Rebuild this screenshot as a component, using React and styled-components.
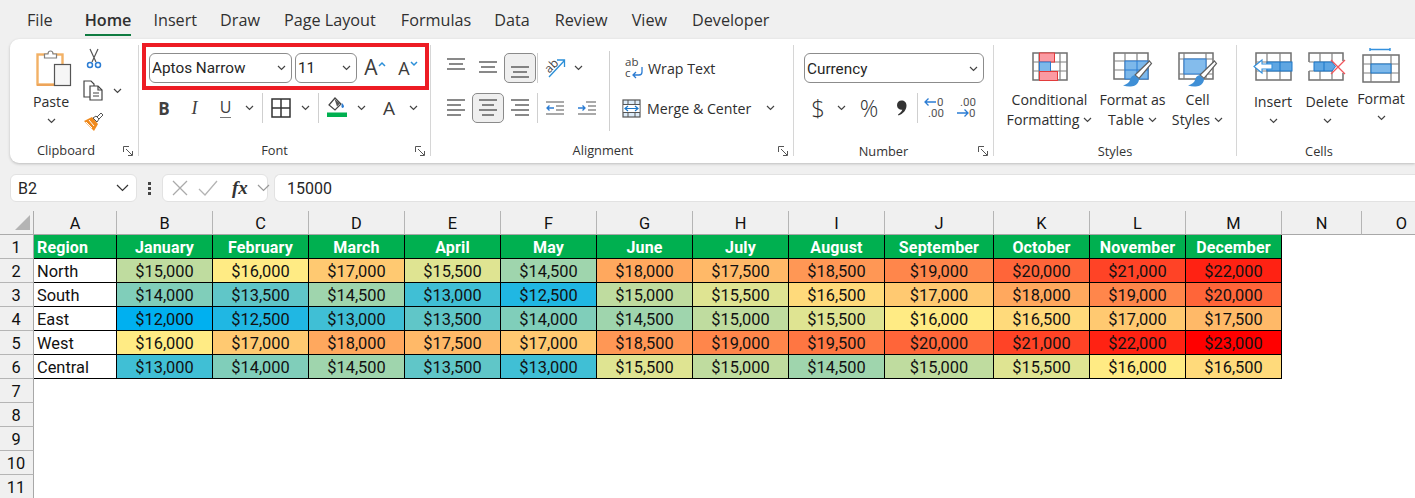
import { Fragment } from 'react';
import styled, { createGlobalStyle } from 'styled-components';

const UI_FONT = '"Open Sans", "Noto Sans", sans-serif';
const CELL_FONT = 'Roboto, "Liberation Sans", sans-serif';

const GlobalStyle = createGlobalStyle`
  html, body { margin: 0; padding: 0; height: 100%; overflow: hidden; background: #f0f0f0; }
  #root { height: 498px; overflow: hidden; }
  * { box-sizing: border-box; }
  svg { overflow: visible; }
`;

const Page = styled.div`
  width: 1415px;
  height: 498px;
  overflow: hidden;
  background: #f0f0f0;
  font-family: ${UI_FONT};
  color: #262626;
`;

/* tabs */
const TabBar = styled.div`
  display: flex;
  height: 39px;
  padding-left: 27px;
`;

const Tab = styled.div`
  height: 36px;
  margin-right: ${({ $gap }) => $gap}px;
  padding-top: 8px;
  font-size: 16.2px;
  line-height: 24px;
  font-weight: ${({ $active }) => ($active ? 600 : 400)};
  color: #303030;
  border-bottom: 2px solid ${({ $active }) => ($active ? '#0f7b41' : 'transparent')};
`;

/* ribbon */
const Ribbon = styled.div`
  display: flex;
  align-items: flex-start;
  height: 124px;
  margin-left: 10px;
  background: #fff;
  border-radius: 9px 0 0 9px;
  box-shadow: 0 1px 3px rgba(0, 0, 0, 0.22);
`;

const Group = styled.div`
  position: relative;
  display: flex;
  flex-direction: column;
  flex: none;
  width: ${({ $w }) => $w}px;
  height: 118px;
`;

const GroupBody = styled.div`
  flex: 1;
  display: flex;
  flex-direction: ${({ $row }) => ($row ? 'row' : 'column')};
  padding-left: ${({ $pl }) => $pl || 0}px;
  min-height: 0;
`;

const GroupLabel = styled.div`
  height: 13px;
  line-height: 13px;
  font-size: 12.8px;
  text-align: center;
  color: #333;
  white-space: nowrap;
  padding-top: ${({ $dy }) => $dy || 0}px;
  padding-right: ${({ $shift }) => $shift || 0}px;
`;

const Launcher = styled.svg`
  position: absolute;
  right: 4px;
  bottom: 0;
  width: 11px;
  height: 11px;
`;

const GroupSep = styled.div`
  flex: none;
  width: 1px;
  height: 111px;
  margin-top: 6px;
  background: #d6d6d6;
`;

const Stack = styled.div`
  display: flex;
  flex-direction: column;
  margin-top: ${({ $mt }) => $mt || 0}px;
  margin-left: ${({ $ml }) => $ml || 0}px;
`;

const ToolRow = styled.div`
  display: flex;
  align-items: center;
  height: ${({ $h }) => $h || 30}px;
  margin-top: ${({ $mt }) => $mt || 0}px;
  margin-left: ${({ $ml }) => $ml || 0}px;
`;

const Tool = styled.div`
  flex: none;
  display: flex;
  align-items: center;
  justify-content: center;
  width: ${({ $w }) => $w || 30}px;
  height: 100%;
  white-space: nowrap;
  color: #333;
  ${({ $on }) => ($on ? 'background: #efefef; border: 1px solid #8a8a8a; border-radius: 5px;' : '')}
`;

const ToolSep = styled.div`
  flex: none;
  width: 1px;
  height: ${({ $h }) => $h || 30}px;
  margin: ${({ $mt }) => $mt || 0}px ${({ $mr }) => $mr || 1}px 0 ${({ $ml }) => $ml || 1}px;
  background: #cfcfcf;
`;

const HighlightBox = styled.div`
  display: flex;
  align-items: center;
  width: 287px;
  height: 47px;
  margin: 4px 0 0 3px;
  padding: 2px 0 0 3px;
  border: 4px solid #ed1c24;
`;

const Combo = styled.div`
  flex: none;
  display: flex;
  align-items: center;
  justify-content: space-between;
  width: ${({ $w }) => $w}px;
  height: 30px;
  margin-right: ${({ $mr }) => $mr || 0}px;
  padding: 1px 5px 0 2px;
  background: #fff;
  border: 1px solid #8c8c8c;
  border-radius: 6px;
  font-family: ${CELL_FONT};
  font-size: 15.3px;
  color: #262626;
`;

const BoldGlyph = styled.span`
  font-size: 17px;
  font-weight: 700;
  color: #404040;
`;

const ItalicGlyph = styled.span`
  font-family: "Liberation Serif", serif;
  font-size: 18px;
  font-style: italic;
  color: #404040;
`;

const UnderGlyph = styled.span`
  font-size: 16px;
  line-height: 19px;
  color: #404040;
  border-bottom: 1.5px solid #777;
`;

const LetterA = styled.span`
  font-size: ${({ $s }) => $s}px;
  line-height: 1;
  color: #3c3c3c;
`;

const ThinGlyph = styled.span`
  font-size: ${({ $s }) => $s}px;
  font-weight: 300;
  line-height: 1;
  color: #333;
`;

const SmallText = styled.span`
  font-size: 14.2px;
  color: #2e2e2e;
  white-space: nowrap;
  margin-left: ${({ $ml }) => $ml || 0}px;
`;

const BigButton = styled.div`
  flex: none;
  display: flex;
  flex-direction: column;
  align-items: center;
  width: ${({ $w }) => $w}px;
  padding-top: ${({ $pt }) => $pt || 13}px;
`;

const IconNudge = styled.div`
  display: flex;
  height: ${({ $h }) => $h}px;
  margin-left: ${({ $ml }) => $ml || 0}px;
`;

const BigLabel = styled.div`
  display: flex;
  align-items: center;
  gap: 4px;
  height: 20px;
  margin-top: ${({ $mt }) => $mt || 0}px;
  font-size: 14.2px;
  line-height: 20px;
  color: #2e2e2e;
  white-space: nowrap;
`;

const ChevLine = styled.div`
  display: flex;
  justify-content: center;
  align-items: center;
  height: 18px;
`;

/* formula bar */
const FormulaBar = styled.div`
  display: flex;
  align-items: stretch;
  height: 28px;
  margin: 11px 0 9px 10px;
  font-family: ${CELL_FONT};
  font-size: 16px;
`;

const NameBox = styled.div`
  display: flex;
  align-items: center;
  justify-content: space-between;
  width: 127px;
  padding: 0 7px;
  background: #fff;
  border: 1px solid #e2e2e2;
  border-radius: 6px;
`;

const Dots = styled.div`
  display: flex;
  flex-direction: column;
  align-items: center;
  justify-content: center;
  gap: 2px;
  width: 25px;
  & > i { display: block; width: 3px; height: 3px; background: #444; }
`;

const FxBox = styled.div`
  display: flex;
  align-items: center;
  width: 106px;
  padding-left: 8px;
  background: #fff;
  border: 1px solid #e2e2e2;
  border-radius: 6px;
`;

const FxGlyph = styled.span`
  font-family: "Liberation Serif", serif;
  font-style: italic;
  font-weight: 700;
  font-size: 19px;
  color: #333;
  margin: 0 9px 0 5px;
`;

const FormulaInput = styled.div`
  flex: 1;
  display: flex;
  align-items: center;
  margin-left: 6px;
  padding-left: 12px;
  background: #fff;
  border: 1px solid #e2e2e2;
  border-right: 0;
  border-radius: 6px 0 0 6px;
`;

/* sheet */
const Sheet = styled.div`
  display: grid;
  grid-template-columns: 34px 83px repeat(8, 96px) 109px repeat(3, 96px) 80px 80px;
  grid-auto-rows: 24px;
  width: 1415px;
  overflow: hidden;
  background: #fff;
  font-family: ${CELL_FONT};
  font-size: 16.4px;
  color: #111;
`;

const Corner = styled.div`
  position: relative;
  background: #f0f0f0;
  border-right: 1px solid #ababab;
  border-bottom: 1px solid #ababab;
  &::after {
    content: '';
    position: absolute;
    right: 3px;
    bottom: 4px;
    width: 15px;
    height: 15px;
    background: #b4b4b4;
    clip-path: polygon(100% 0, 100% 100%, 0 100%);
  }
`;

const ColHead = styled.div`
  display: flex;
  align-items: center;
  justify-content: center;
  background: #f0f0f0;
  border-right: 1px solid #b5b5b5;
  border-bottom: 1px solid #a8a8a8;
  padding-top: 2px;
`;

const RowHead = styled.div`
  display: flex;
  align-items: center;
  justify-content: center;
  padding: 2px 1px 0 0;
  background: #f0f0f0;
  border-right: 1px solid #a8a8a8;
  border-bottom: 1px solid #b5b5b5;
`;

const Cell = styled.div`
  display: flex;
  align-items: center;
  justify-content: ${({ $left }) => ($left ? 'flex-start' : 'center')};
  padding: 2px 0 0 ${({ $left }) => ($left ? '3px' : '0')};
  background: ${({ $bg }) => $bg || '#fff'};
  border-right: 1px solid #000;
  border-bottom: 1px solid #000;
  color: ${({ $head }) => ($head ? '#fff' : '#111')};
  font-size: ${({ $head }) => ($head ? '16px' : 'inherit')};
  font-weight: ${({ $head }) => ($head ? 700 : 400)};
  letter-spacing: ${({ $head }) => ($head ? '0.15px' : '0')};
  white-space: nowrap;
`;

const Blank = styled.div`
  background: #fff;
  grid-column: ${({ $span }) => $span || 'auto'};
`;

const COLS = ['A', 'B', 'C', 'D', 'E', 'F', 'G', 'H', 'I', 'J', 'K', 'L', 'M', 'N', 'O'];
const MONTHS = ['Region', 'January', 'February', 'March', 'April', 'May', 'June', 'July', 'August', 'September', 'October', 'November', 'December'];
const DATA = [
  ['North', 15000, 16000, 17000, 15500, 14500, 18000, 17500, 18500, 19000, 20000, 21000, 22000],
  ['South', 14000, 13500, 14500, 13000, 12500, 15000, 15500, 16500, 17000, 18000, 19000, 20000],
  ['East', 12000, 12500, 13000, 13500, 14000, 14500, 15000, 15500, 16000, 16500, 17000, 17500],
  ['West', 16000, 17000, 18000, 17500, 17000, 18500, 19000, 19500, 20000, 21000, 22000, 23000],
  ['Central', 13000, 14000, 14500, 13500, 13000, 15500, 15000, 14500, 15000, 15500, 16000, 16500],
];

// excel 3 colour scale: blue, yellow, red
const mix = (a, b, t) => a.map((v, i) => Math.round(v + (b[i] - v) * t));
const scaleColor = (v) => {
  const blue = [0, 176, 240];
  const yellow = [255, 235, 132];
  const red = [255, 0, 0];
  const c = v <= 16000 ? mix(blue, yellow, (v - 12000) / 4000) : mix(yellow, red, (v - 16000) / 7000);
  return `rgb(${c.join(',')})`;
};

const money = (v) => '$' + v.toLocaleString('en-US');

const Chev = ({ c = '#444' }) => (
  <svg width="9" height="6" viewBox="0 0 9 6" fill="none"><path d="M1 1l3.500 3.500L8 1" stroke={c} strokeWidth="1.200" /></svg>
);

const WideChev = ({ c = '#444' }) => (
  <svg width="13" height="8" viewBox="0 0 13 8" fill="none"><path d="M1 1l5.500 5.500L12 1" stroke={c} strokeWidth="1.200" /></svg>
);

const Launch = () => (
  <Launcher viewBox="0 0 11 11" fill="none">
    <path d="M.5 6V.5H6M3 3l6 6M9.500 5v4.500H5" stroke="#555" strokeWidth="1" />
  </Launcher>
);

const PasteIcon = () => (
  <svg width="36" height="38" viewBox="0 0 36 38">
    <rect x="1.500" y="5.500" width="25" height="30" fill="#fff" stroke="#f2b166" strokeWidth="2.400" />
    <path d="M1 36h26" stroke="#eda45a" strokeWidth="2" />
    <path d="M8.500 9V5h3.500c0-4 5-4 5 0h3.500v4z" fill="#fff" stroke="#7f7f7f" strokeWidth="1.200" />
    <rect x="18.500" y="15.500" width="16" height="21" fill="#f6f6f6" stroke="#555" strokeWidth="1.200" />
  </svg>
);

const CutIcon = () => (
  <svg width="16" height="21" viewBox="0 0 16 21" fill="none">
    <path d="M4 1l6 13M12 1L6 14" stroke="#555" strokeWidth="1.200" />
    <circle cx="4" cy="17" r="2.500" stroke="#2b7cd3" strokeWidth="1.500" />
    <circle cx="12" cy="17" r="2.500" stroke="#2b7cd3" strokeWidth="1.500" />
  </svg>
);

const CopyIcon = () => (
  <svg width="21" height="21" viewBox="0 0 21 21" fill="#fff" stroke="#444" strokeWidth="1.200">
    <path d="M1 1h7l3 3v13H1z" />
    <path d="M7 6h8l4 4v10H7z" />
    <path d="M15 6v4h4M10 13h6M10 16h6" fill="none" />
  </svg>
);

const BrushIcon = () => (
  <svg width="21" height="20" viewBox="0 0 21 20">
    <path d="M1 9l8-4 6 7-4 7z" fill="#f08a1d" />
    <path d="M3 10l6 6M6 8l5 6" stroke="#fff" strokeWidth="1" />
    <path d="M10 6l3-2 3 3-2 3zM14 5l4-4 2 2-4 4z" fill="#fff" stroke="#555" strokeWidth="1" />
  </svg>
);

const SizeCaret = ({ down }) => (
  <svg width="8" height="14" viewBox="0 0 8 14" fill="none">
    <path d={down ? 'M1 1l3 3 3-3' : 'M1 5l3-3 3 3'} stroke="#2b8fd8" strokeWidth="1.500" />
  </svg>
);

const BorderIcon = () => (
  <svg width="20" height="20" viewBox="0 0 20 20" fill="none" stroke="#333" strokeWidth="1.500">
    <rect x="1" y="1" width="18" height="18" />
    <path d="M10 1v18M1 10h18" />
  </svg>
);

const FillIcon = () => (
  <svg width="22" height="22" viewBox="0 0 22 22">
    <path d="M3 8l6-7 6 6-6 6z" fill="#fff" stroke="#444" strokeWidth="1.200" />
    <path d="M8.500 2l5.500 4.500-3 3z" fill="#555" />
    <path d="M16 6c2 2 2.500 3.500 1.500 4.500s-2.500 0-2-2z" fill="#2b7cd3" />
    <rect x="1" y="15.500" width="20" height="4.500" fill="#00b050" />
  </svg>
);

const Lines = ({ rows }) => (
  <svg width="20" height="20" viewBox="0 0 20 20" fill="none" stroke="#4a4a4a" strokeWidth="1.300">
    {rows.map(([y, x1, x2]) => <path key={y} d={`M${x1} ${y}H${x2}`} />)}
  </svg>
);

const OrientIcon = () => (
  <svg width="22" height="22" viewBox="0 0 22 22" fill="none">
    <text x="1" y="13" transform="rotate(-45 7 11)" fontFamily="Open Sans, sans-serif" fontSize="12" fill="#444">ab</text>
    <path d="M4 20L19 4M12 3h7.500v7" stroke="#2b8fd8" strokeWidth="1.300" />
  </svg>
);

const IndentIcon = ({ inc }) => (
  <svg width="20" height="16" viewBox="0 0 20 16" fill="none">
    <path d={inc ? 'M9 2h10M11 6h8M11 10h8M1 14h18' : 'M1 2h18M11 6h8M11 10h8M1 14h18'} stroke="#555" strokeWidth="1.200" />
    <path d={inc ? 'M1 8h7M5.500 5.500L8 8l-2.500 2.500' : 'M2 8h7M4.500 5.500L2 8l2.500 2.500'} stroke="#2b7cd3" strokeWidth="1.300" />
  </svg>
);

const WrapIcon = () => (
  <svg width="20" height="22" viewBox="0 0 20 22" fill="none">
    <text x="0" y="9" fontFamily="Open Sans, sans-serif" fontSize="11.500" fill="#444">ab</text>
    <text x="0" y="20" fontFamily="Open Sans, sans-serif" fontSize="11.500" fill="#444">c</text>
    <path d="M17 10v5c0 2-1 3-3 3H8M11 15l-3 3 3 3" stroke="#2b7cd3" strokeWidth="1.300" />
  </svg>
);

const MergeIcon = () => (
  <svg width="19" height="19" viewBox="0 0 19 19" fill="none">
    <rect x="1" y="1" width="17" height="17" fill="#dcebf8" stroke="#555" strokeWidth="1.200" />
    <path d="M1 5.500h17M1 13.500h17M6 1v4M13 1v4M6 14v4M13 14v4" stroke="#555" strokeWidth="1" />
    <rect x="1.500" y="6" width="16" height="7" fill="#fff" />
    <path d="M3 9.500h13M6 7l-3 2.500L6 12M13 7l3 2.500L13 12" stroke="#1b76c8" strokeWidth="1.200" />
  </svg>
);

const CommaIcon = () => (
  <svg width="11" height="16" viewBox="0 0 11 16">
    <path d="M5.500 0.500C8.500 0.500 10.500 2.500 10.500 5.500C10.500 10 7 14 2.500 15.500L2 14.500C4.500 13 6 11 6.300 9.700C3.500 10 1 8.200 1 5.200C1 2.500 3 0.500 5.500 0.500z" fill="#333" />
  </svg>
);

const DecimalIcon = ({ more }) => (
  <svg width="22" height="22" viewBox="0 0 22 22" fill="none">
    {more ? (
      <>
        <path d="M1 5h11M4.500 1.500L1 5l3.500 3.500" stroke="#2b7cd3" strokeWidth="1.300" />
        <text x="13" y="9" fontFamily="Roboto, sans-serif" fontSize="11.500" fill="#555">0</text>
        <text x="4" y="20" fontFamily="Roboto, sans-serif" fontSize="11.500" fill="#555">.00</text>
      </>
    ) : (
      <>
        <text x="4" y="9" fontFamily="Roboto, sans-serif" fontSize="11.500" fill="#555">.00</text>
        <path d="M1 16h11M8.500 12.500L12 16l-3.500 3.500" stroke="#2b7cd3" strokeWidth="1.300" />
        <text x="13" y="20" fontFamily="Roboto, sans-serif" fontSize="11.500" fill="#555">0</text>
      </>
    )}
  </svg>
);

const GridBase = ({ xs, ys, w = 36, h = 28 }) => (
  <>
    <rect x="1" y="1" width={w - 2} height={h - 2} fill="#fff" stroke="#6f6f6f" strokeWidth="1.500" />
    <path d={`${ys.map((y) => `M1 ${y}H${w - 1}`).join('')}${xs.map((x) => `M${x} 1V${h - 1}`).join('')}`} stroke="#808080" strokeWidth="1.200" />
  </>
);

const CondIcon = () => (
  <svg width="36" height="30" viewBox="0 0 36 30" fill="none">
    <GridBase w={36} h={29} xs={[7, 18, 28]} ys={[10, 19]} />
    <rect x="7.500" y="1" width="15" height="9" fill="#fb9aa2" stroke="#e23b3b" strokeWidth="1" />
    <rect x="7.500" y="10" width="11" height="9.500" fill="#7db8ea" stroke="#2b7cd3" strokeWidth="1" />
    <rect x="7.500" y="19.500" width="18" height="9" fill="#fb9aa2" stroke="#e23b3b" strokeWidth="1" />
  </svg>
);

const Paintbrush = () => (
  <>
    <path d="M36.500 9L38.500 11.500L26 26.500L22 23z" fill="#fff" stroke="#5f5f5f" strokeWidth="1.200" />
    <path d="M21.500 23c-2.500 .5-4 2.500-4.500 5-.5 2.500-3.500 4.500-7 5.500 6 2 13.500 1.500 15.500-4 .5-1 .5-2 .5-2.500z" fill="#3f8fd6" />
  </>
);

const TableIcon = () => (
  <svg width="40" height="36" viewBox="0 0 40 36" fill="none">
    <GridBase w={36} h={28} xs={[12, 24]} ys={[9, 18]} />
    <rect x="12" y="9" width="23" height="18" fill="#7db8ea" stroke="#2b7cd3" strokeWidth="1" />
    <path d="M12 18h23M24 9v18" stroke="#2b7cd3" strokeWidth="1" />
    <Paintbrush />
  </svg>
);

const CellStyleIcon = () => (
  <svg width="40" height="36" viewBox="0 0 40 36" fill="none">
    <GridBase w={36} h={28} xs={[6, 28]} ys={[7, 22]} />
    <rect x="6" y="7" width="22" height="15" fill="#84bcec" stroke="#2b7cd3" strokeWidth="1" />
    <Paintbrush />
  </svg>
);

const InsertIcon = () => (
  <svg width="40" height="30" viewBox="0 0 40 30" fill="none">
    <rect x="3" y="1" width="35" height="27" fill="#fff" stroke="#6f6f6f" strokeWidth="1.500" />
    <path d="M14 1v27M27 1v27M3 10h35M3 19h35" stroke="#808080" strokeWidth="1.200" />
    <rect x="14" y="10" width="25" height="9" fill="#5fa6e2" stroke="#1b76c8" strokeWidth="1" />
    <path d="M27 10v9" stroke="#1b76c8" />
    <path d="M1 14.500L9 8v4h10v5H9v4z" fill="#fff" stroke="#3390dd" strokeWidth="1.100" />
  </svg>
);

const DeleteIcon = () => (
  <svg width="38" height="30" viewBox="0 0 38 30" fill="none">
    <path d="M1 10V1h34v8M1 19v9h34v-7" stroke="#6f6f6f" strokeWidth="1.500" />
    <path d="M12 1v9M12 19v9M24 1v9M24 19v9M1 10h24M1 19h24" stroke="#808080" strokeWidth="1.200" />
    <path d="M6 10h18l3.500 4.500L24 19H6z" fill="#5fa6e2" stroke="#1b76c8" strokeWidth="1" />
    <path d="M16 10v9" stroke="#1b76c8" />
    <path d="M23 8l14 14M37 8L23 22" stroke="#f0565c" strokeWidth="1.300" />
  </svg>
);

const FormatIcon = () => (
  <svg width="38" height="36" viewBox="0 0 38 36" fill="none">
    <path d="M8 1.500h20M8 0v3M28 0v3" stroke="#3390dd" strokeWidth="1.400" />
    <rect x="1" y="7" width="36" height="27" fill="#fff" stroke="#6f6f6f" strokeWidth="1.500" />
    <path d="M9 7v27M29 7v27M1 16h36M1 25h36" stroke="#808080" strokeWidth="1.200" />
    <rect x="9" y="16" width="20" height="9" fill="#7db8ea" stroke="#1b76c8" strokeWidth="1" />
  </svg>
);

const X = () => (
  <svg width="18" height="18" viewBox="0 0 18 18" fill="none"><path d="M2 2l14 14M16 2L2 16" stroke="#aaa" strokeWidth="1.300" /></svg>
);

const Check = () => (
  <svg width="22" height="16" viewBox="0 0 22 16" fill="none"><path d="M2 9l6 6L20 1" stroke="#b4b4b4" strokeWidth="1.300" /></svg>
);

const App = () => {
  return (
    <Page>
      <GlobalStyle />
      <TabBar>
        <Tab $gap={32}>File</Tab>
        <Tab $gap={22} $active>Home</Tab>
        <Tab $gap={23}>Insert</Tab>
        <Tab $gap={24}>Draw</Tab>
        <Tab $gap={25}>Page Layout</Tab>
        <Tab $gap={23}>Formulas</Tab>
        <Tab $gap={25}>Data</Tab>
        <Tab $gap={24}>Review</Tab>
        <Tab $gap={25}>View</Tab>
        <Tab $gap={0}>Developer</Tab>
      </TabBar>

      <Ribbon>
        <Group $w={128}>
          <GroupBody $row>
            <BigButton $w={82} $pt={10}>
              <IconNudge $h={38} $ml={6}><PasteIcon /></IconNudge>
              <BigLabel $mt={5}>Paste</BigLabel>
              <ChevLine><Chev /></ChevLine>
            </BigButton>
            <Stack $mt={9} $ml={-8}>
              <ToolRow $h={21} $ml={-1}><Tool $w={21}><CutIcon /></Tool></ToolRow>
              <ToolRow $h={21} $mt={11} $ml={-1}>
                <Tool $w={21}><CopyIcon /></Tool>
                <Tool $w={27}><Chev /></Tool>
              </ToolRow>
              <ToolRow $h={20} $mt={11} $ml={-1}><Tool $w={21}><BrushIcon /></Tool></ToolRow>
            </Stack>
          </GroupBody>
          <GroupLabel $shift={16}>Clipboard</GroupLabel>
          <Launch />
        </Group>
        <GroupSep />

        <Group $w={291}>
          <GroupBody>
            <HighlightBox>
              <Combo $w={143} $mr={3}>Aptos Narrow<Chev /></Combo>
              <Combo $w={62}>11<Chev /></Combo>
              <Tool $w={36}><LetterA $s={21}>A</LetterA><SizeCaret /></Tool>
              <Tool $w={30}><LetterA $s={18}>A</LetterA><SizeCaret down /></Tool>
            </HighlightBox>
            <ToolRow $h={30} $mt={3} $ml={10}>
              <Tool $w={30}><BoldGlyph>B</BoldGlyph></Tool>
              <Tool $w={31}><ItalicGlyph>I</ItalicGlyph></Tool>
              <Tool $w={31}><UnderGlyph>U</UnderGlyph></Tool>
              <Tool $w={17}><Chev /></Tool>
              <ToolSep $ml={4} $mr={2} />
              <Tool $w={32}><BorderIcon /></Tool>
              <Tool $w={17}><Chev /></Tool>
              <ToolSep $ml={4} $mr={2} />
              <Tool $w={32}><FillIcon /></Tool>
              <Tool $w={17}><Chev /></Tool>
              <Tool $w={38}><LetterA $s={19}>A</LetterA></Tool>
              <Tool $w={10}><Chev /></Tool>
            </ToolRow>
          </GroupBody>
          <GroupLabel $shift={20}>Font</GroupLabel>
          <Launch />
        </Group>
        <GroupSep />

        <Group $w={362}>
          <GroupBody $row>
            <Stack $mt={14} $ml={9}>
              <ToolRow $h={30}>
                <Tool $w={32}><Lines rows={[[1, 1, 19], [6, 3, 17], [11, 1, 19]]} /></Tool>
                <Tool $w={32}><Lines rows={[[4, 1, 19], [9, 3, 17], [14, 1, 19]]} /></Tool>
                <Tool $w={32} $on><Lines rows={[[9, 1, 19], [14, 3, 17], [19, 1, 19]]} /></Tool>
                <ToolSep $h={30} $ml={1} $mr={6} />
                <Tool $w={24}><OrientIcon /></Tool>
                <Tool $w={20}><Chev /></Tool>
              </ToolRow>
              <ToolRow $h={30} $mt={10}>
                <Tool $w={32}><Lines rows={[[2, 1, 19], [7, 1, 15], [12, 1, 19], [17, 1, 15]]} /></Tool>
                <Tool $w={32} $on><Lines rows={[[2, 1, 19], [7, 4, 16], [12, 1, 19], [17, 4, 16]]} /></Tool>
                <Tool $w={32}><Lines rows={[[2, 1, 19], [7, 5, 19], [12, 1, 19], [17, 5, 19]]} /></Tool>
                <ToolSep $h={30} $ml={1} $mr={1} />
                <Tool $w={32}><IndentIcon /></Tool>
                <Tool $w={32}><IndentIcon inc /></Tool>
              </ToolRow>
            </Stack>
            <ToolSep $h={80} $ml={6} $mr={0} $mt={12} />
            <Stack $mt={14} $ml={11}>
              <ToolRow $h={30} $ml={3}>
                <WrapIcon />
                <SmallText $ml={3}>Wrap Text</SmallText>
              </ToolRow>
              <ToolRow $h={30} $mt={10}>
                <MergeIcon />
                <SmallText $ml={6}>Merge &amp; Center</SmallText>
                <Tool $w={38}><Chev /></Tool>
              </ToolRow>
            </Stack>
          </GroupBody>
          <GroupLabel $shift={18}>Alignment</GroupLabel>
          <Launch />
        </Group>
        <GroupSep />

        <Group $w={199}>
          <GroupBody $pl={10}>
            <ToolRow $h={30} $mt={14}>
              <Combo $w={180}>Currency<Chev /></Combo>
            </ToolRow>
            <ToolRow $h={30} $mt={10} $ml={-1}>
              <Tool $w={30}><ThinGlyph $s={24}>$</ThinGlyph></Tool>
              <Tool $w={17}><Chev /></Tool>
              <Tool $w={38}><ThinGlyph $s={23}>%</ThinGlyph></Tool>
              <Tool $w={26}><CommaIcon /></Tool>
              <ToolSep $h={30} $ml={3} $mr={6} />
              <Tool $w={22}><DecimalIcon more /></Tool>
              <Tool $w={10} />
              <Tool $w={22}><DecimalIcon /></Tool>
            </ToolRow>
          </GroupBody>
          <GroupLabel $shift={20} $dy={1}>Number</GroupLabel>
          <Launch />
        </Group>
        <GroupSep />

        <Group $w={242}>
          <GroupBody $row $pl={9}>
            <BigButton $w={93}>
              <CondIcon />
              <BigLabel $mt={8}>Conditional</BigLabel>
              <BigLabel>Formatting <Chev /></BigLabel>
            </BigButton>
            <BigButton $w={73}>
              <TableIcon />
              <BigLabel $mt={2}>Format as</BigLabel>
              <BigLabel>Table <Chev /></BigLabel>
            </BigButton>
            <BigButton $w={57}>
              <CellStyleIcon />
              <BigLabel $mt={2}>Cell</BigLabel>
              <BigLabel>Styles <Chev /></BigLabel>
            </BigButton>
          </GroupBody>
          <GroupLabel $dy={1}>Styles</GroupLabel>
        </Group>
        <GroupSep />

        <Group $w={178}>
          <GroupBody $row $pl={8}>
            <BigButton $w={56}>
              <InsertIcon />
              <BigLabel $mt={10}>Insert</BigLabel>
              <ChevLine><Chev /></ChevLine>
            </BigButton>
            <BigButton $w={52}>
              <DeleteIcon />
              <BigLabel $mt={10}>Delete</BigLabel>
              <ChevLine><Chev /></ChevLine>
            </BigButton>
            <BigButton $w={56} $pt={9}>
              <FormatIcon />
              <BigLabel $mt={5}>Format</BigLabel>
              <ChevLine><Chev /></ChevLine>
            </BigButton>
          </GroupBody>
          <GroupLabel $shift={14} $dy={1}>Cells</GroupLabel>
        </Group>
      </Ribbon>

      <FormulaBar>
        <NameBox>B2<WideChev c="#333" /></NameBox>
        <Dots><i /><i /><i /></Dots>
        <FxBox>
          <X />
          <Tool $w={38}><Check /></Tool>
          <FxGlyph>fx</FxGlyph>
          <WideChev c="#999" />
        </FxBox>
        <FormulaInput>15000</FormulaInput>
      </FormulaBar>

      <Sheet>
        <Corner />
        {COLS.map((c) => <ColHead key={c}>{c}</ColHead>)}

        <RowHead>1</RowHead>
        {MONTHS.map((m, i) => <Cell key={m} $head $left={i === 0} $bg="#00b050">{m}</Cell>)}
        <Blank $span="span 2" />

        {DATA.map((row, r) => (
          <Fragment key={row[0]}>
            <RowHead>{r + 2}</RowHead>
            {row.map((v, i) => (i === 0
              ? <Cell key={i} $left>{v}</Cell>
              : <Cell key={i} $bg={scaleColor(v)}>{money(v)}</Cell>))}
            <Blank $span="span 2" />
          </Fragment>
        ))}

        {[7, 8, 9, 10, 11].map((n) => (
          <Fragment key={n}>
            <RowHead>{n}</RowHead>
            <Blank $span="2 / -1" />
          </Fragment>
        ))}
      </Sheet>
    </Page>
  );
};

export default App;
